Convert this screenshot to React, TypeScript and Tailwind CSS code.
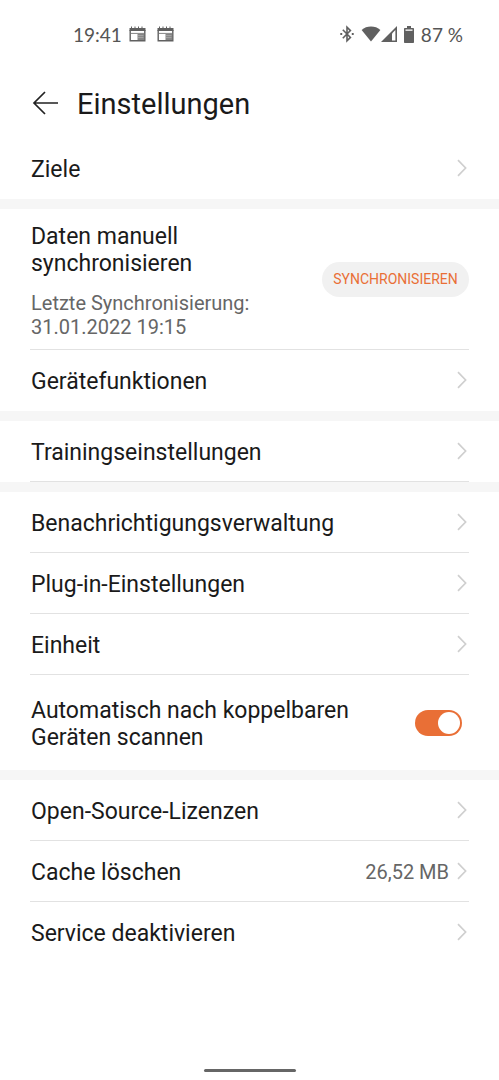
import React, { useState } from 'react';

const ChevronIcon = () => (
  <svg width="10" height="18" viewBox="0 0 10 18" fill="none" stroke="#cfcfcf" strokeWidth="1.7" className="shrink-0" aria-hidden="true">
    <path d="M1 1.2 8.6 9 1 16.8" />
  </svg>
);

const CalendarIcon = () => (
  <svg width="17" height="16" viewBox="0 0 17 16" aria-hidden="true">
    <path d="M.5 2H2V.5h1V2h2.5V.5h1V2H9V.5h1V2h2.5V.5h1V2h3v3H.5z" fill="#606060" />
    <path d="M1.2 4v10.8h14.6V4" fill="none" stroke="#606060" strokeWidth="1.4" />
    <path d="M2 7.4h13" stroke="#858585" strokeWidth="1" />
    <path d="M8.5 8H15v6H8.5z" fill="#858585" />
    <path d="M9 9.6h5.5M9 11.6h5.5" stroke="#b5b5b5" strokeWidth=".7" />
  </svg>
);

const BluetoothIcon = () => (
  <svg width="14" height="18" viewBox="0 0 14 18" fill="none" stroke="#606060" strokeWidth="1.6" aria-hidden="true">
    <path d="M2.8 4.8 10.4 12.4 7 15.8V2.2l3.4 3.4L2.8 13.2" />
    <path d="M.3 9h1.9M11.8 9h1.9" strokeWidth="1.9" />
  </svg>
);

const WifiIcon = () => (
  <svg width="20" height="16" viewBox="0 0 20 16" fill="#606060" aria-hidden="true">
    <path d="M10 15.6.6 3.9C3.2 1.8 6.4.6 10 .6s6.8 1.2 9.4 3.3z" />
  </svg>
);

const SignalIcon = () => (
  <svg width="16" height="16" viewBox="0 0 16 16" aria-hidden="true">
    <path d="M0 16 16 0v16z" fill="#606060" />
    <path d="M11 7.5 14.4 4v10.5H11z" fill="#fff" />
  </svg>
);

const BatteryIcon = () => (
  <svg width="10" height="17" viewBox="0 0 10 17" aria-hidden="true">
    <path d="M3 0h4v2h2.2q.8 0 .8.8v13.4q0 .8-.8.8H.8q-.8 0-.8-.8V2.8Q0 2 .8 2H3z" fill="#606060" />
    <path d="M1.5 3.5h7v1.3h-7z" fill="#fff" />
  </svg>
);

interface LinkRowProps {
  label: string;
  value?: string;
  divider?: boolean;
}

const LinkRow: React.FC<LinkRowProps> = ({ label, value, divider = false }) => (
  <a
    href="#"
    className={`mx-[30px] flex h-[61px] items-center justify-between border-b pr-[2px] pl-px ${
      divider ? 'border-[#e2e2e2]' : 'border-transparent'
    }`}
  >
    <span className="pt-[2px]">{label}</span>
    <span className="flex items-center gap-2 text-xl text-[#666666]">
      <span className="pt-[2px]">{value}</span>
      <ChevronIcon />
    </span>
  </a>
);

const SectionGap = () => <div className="h-[10px] bg-[#f6f6f6]" />;

export default function App() {
  const [autoScan, setAutoScan] = useState(true);

  return (
    <div className="flex min-h-screen flex-col bg-white font-[Roboto,sans-serif] text-[23px] leading-[27px] text-[#1a1a1a]">
      {/* Statusleiste */}
      <div className="flex h-[70px] items-center justify-between pr-[36px] pb-[2px] pl-[73px] font-[Lato,sans-serif] text-[19px] text-[#555555]">
        <div className="flex items-center gap-[7px]">
          <span>19:41</span>
          <span className="flex gap-[11px]">
            <CalendarIcon />
            <CalendarIcon />
          </span>
        </div>
        <div className="flex items-center gap-[7px]">
          <BluetoothIcon />
          <span className="flex items-center">
            <WifiIcon />
            <SignalIcon />
          </span>
          <BatteryIcon />
          <span>87 %</span>
        </div>
      </div>

      <header className="flex h-[68px] items-center gap-[18px] pb-[2px] pl-8">
        <button type="button" aria-label="Zurück">
          <svg width="27" height="24" viewBox="0 0 27 24" fill="none" stroke="#222222" strokeWidth="1.7">
            <path d="M26 12H2M13 1 2 12l11 11" />
          </svg>
        </button>
        <h1 className="pt-[2px] text-[29px] leading-8">Einstellungen</h1>
      </header>

      <main>
        <LinkRow label="Ziele" />
        <SectionGap />

        <div className="mx-[30px] flex h-[141px] items-center justify-between gap-2 border-b border-[#e2e2e2] pl-px">
          <div className="flex flex-col gap-[14px] pt-1">
            <p>Daten manuell synchronisieren</p>
            <p className="text-xl leading-6 text-[#666666]">Letzte Synchronisierung: 31.01.2022 19:15</p>
          </div>
          <button
            type="button"
            className="h-[35px] w-[147px] shrink-0 rounded-full bg-[#f1f1f1] text-[14px] text-[#e96f36]"
          >
            SYNCHRONISIEREN
          </button>
        </div>
        <LinkRow label="Gerätefunktionen" />
        <SectionGap />

        <LinkRow label="Trainingseinstellungen" divider />
        <SectionGap />

        <LinkRow label="Benachrichtigungsverwaltung" divider />
        <LinkRow label="Plug-in-Einstellungen" divider />
        <LinkRow label="Einheit" divider />
        <div className="mx-[30px] flex h-[95px] items-center justify-between gap-10 pr-[7px] pl-px">
          <label htmlFor="auto-scan" className="pt-[2px]">
            Automatisch nach koppelbaren Geräten scannen
          </label>
          <input
            id="auto-scan"
            type="checkbox"
            role="switch"
            checked={autoScan}
            onChange={(e) => setAutoScan(e.target.checked)}
            className="flex h-[26px] w-[47px] shrink-0 appearance-none items-center rounded-full bg-[#cccccc] px-[2px] before:size-[22px] before:rounded-full before:bg-white checked:justify-end checked:bg-[#e96f36]"
          />
        </div>
        <SectionGap />

        <LinkRow label="Open-Source-Lizenzen" divider />
        <LinkRow label="Cache löschen" value="26,52 MB" divider />
        <LinkRow label="Service deaktivieren" />
      </main>

      {/* Gestenleiste */}
      <div className="mt-auto flex justify-center pb-2">
        <div className="h-[3px] w-[92px] rounded-full bg-[#666666]" />
      </div>
    </div>
  );
}
